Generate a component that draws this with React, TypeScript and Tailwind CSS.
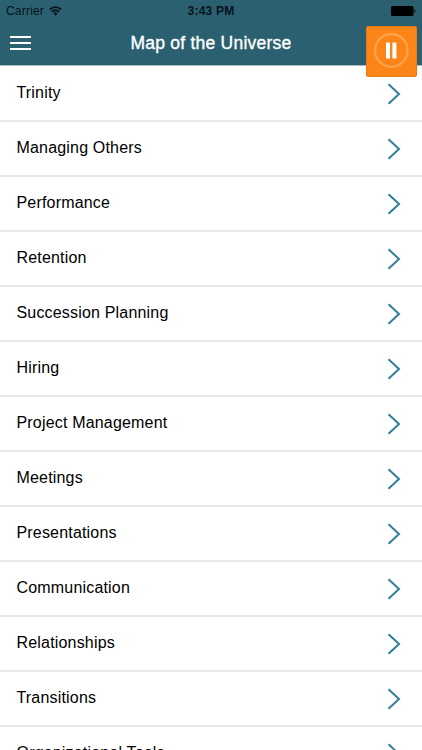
const topics = [
  "Trinity",
  "Managing Others",
  "Performance",
  "Retention",
  "Succession Planning",
  "Hiring",
  "Project Management",
  "Meetings",
  "Presentations",
  "Communication",
  "Relationships",
  "Transitions",
  "Organizational Tools",
];

function WifiIcon() {
  return (
    <svg className="h-[10px] w-[13px]" viewBox="0 0 13 10" fill="none" stroke="#06131a" strokeWidth="1.8">
      <path d="M0.8 3.5a8.1 8.1 0 0 1 11.4 0" />
      <path d="M2.8 5.8a5.2 5.2 0 0 1 7.4 0" />
      <path d="M6.5 9.6 4.4 7.4a2.9 2.9 0 0 1 4.2 0z" fill="#06131a" stroke="none" />
    </svg>
  );
}

function BatteryIcon() {
  return (
    <svg className="h-[10px] w-[25px]" viewBox="0 0 25 10" fill="#000">
      <rect x="0" y="0" width="22.5" height="10" rx="1.5" />
      <path d="M23.3 3.3c1.4.3 1.4 3.1 0 3.4z" />
    </svg>
  );
}

function StatusBar() {
  return (
    <div className="grid h-[22px] grid-cols-3 items-center pl-[6px] pr-[6px] text-[12px] leading-none text-[#06131a]">
      <div className="flex items-center gap-[5px]">
        <span className="text-[12px] tracking-[0.2px]">Carrier</span>
        <WifiIcon />
      </div>
      <span className="text-center font-bold tracking-[0.2px]">3:43 PM</span>
      <div className="flex justify-end">
        <BatteryIcon />
      </div>
    </div>
  );
}

function PauseButton() {
  return (
    <button
      aria-label="Pause"
      className="absolute left-[366px] top-[26px] h-[51px] w-[51px] rounded-[2px] border border-[#e87a1c] bg-[#fd8518]"
    >
      <svg className="size-[49px]" viewBox="0 0 49 49">
        <circle cx="24.3" cy="23.5" r="16.3" fill="none" stroke="#ffa44c" strokeWidth="2.2" />
        <path d="M19 15.4h4v16h-4zM25.4 15.4h4v16h-4z" fill="#fff" />
      </svg>
    </button>
  );
}

export default function App() {
  return (
    <div className="relative h-[750px] w-[422px] overflow-hidden bg-white font-['Liberation_Sans',Arial,sans-serif]">
      <header className="h-[66px] border-b border-[#a9bdc6] bg-[#2b6071]">
        <StatusBar />
        <div className="grid h-[43px] grid-cols-[60px_1fr_60px] items-center">
          <button aria-label="Menu" className="mb-[1px] ml-[10px] flex w-[21px] flex-col gap-[4px]">
            <span className="h-[2px] bg-white" />
            <span className="h-[2px] bg-white" />
            <span className="h-[2px] bg-white" />
          </button>
          <h1 className="whitespace-nowrap text-center text-[17.5px] tracking-[0.24px] text-white [-webkit-text-stroke:0.35px_white]">
            Map of the Universe
          </h1>
        </div>
      </header>
      <ul className="pt-px">
        {topics.map((topic) => (
          <li
            key={topic}
            className="flex h-[55px] items-center justify-between border-b-2 border-[#e8e8e8] pl-[16.5px] pr-[21px] text-[16px] text-black"
          >
            <span className="pb-[2px] tracking-[0.18px]">{topic}</span>
            <svg className="h-[22px] w-[14px]" viewBox="0 0 14 22" fill="none" stroke="#2f7f9c" strokeWidth="2">
              <path d="M1.5 1.3 12 11 1.5 20.7" />
            </svg>
          </li>
        ))}
      </ul>
      <PauseButton />
    </div>
  );
}
